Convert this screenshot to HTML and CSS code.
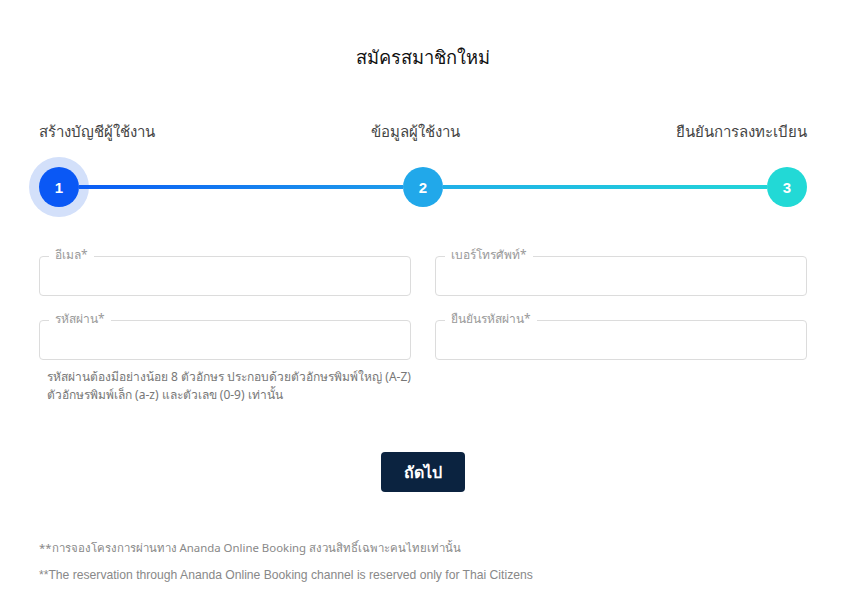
FILE: index.html
```html
<!DOCTYPE html>
<html lang="th">
<head>
<meta charset="utf-8">
<title>สมัครสมาชิกใหม่</title>
<link rel="stylesheet" href="styles.css">
</head>
<body>
<main class="page">
  <h1 class="title">สมัครสมาชิกใหม่</h1>

  <div class="steps">
    <div class="step-labels">
      <span class="step-label">สร้างบัญชีผู้ใช้งาน</span>
      <span class="step-label">ข้อมูลผู้ใช้งาน</span>
      <span class="step-label">ยืนยันการลงทะเบียน</span>
    </div>
    <div class="track">
      <span class="dot dot-1 active">1</span>
      <span class="seg seg-1"></span>
      <span class="dot dot-2">2</span>
      <span class="seg seg-2"></span>
      <span class="dot dot-3">3</span>
    </div>
  </div>

  <form class="form">
    <div class="grid">
      <div class="field">
        <span class="field-label">อีเมล*</span>
        <input class="field-input" type="email">
      </div>
      <div class="field">
        <span class="field-label">เบอร์โทรศัพท์*</span>
        <input class="field-input" type="tel">
      </div>
      <div class="col">
        <div class="field">
          <span class="field-label">รหัสผ่าน*</span>
          <input class="field-input" type="password">
        </div>
        <p class="hint">รหัสผ่านต้องมีอย่างน้อย 8 ตัวอักษร ประกอบด้วยตัวอักษรพิมพ์ใหญ่ (A-Z)<br>ตัวอักษรพิมพ์เล็ก (a-z) และตัวเลข (0-9) เท่านั้น</p>
      </div>
      <div class="col">
        <div class="field">
          <span class="field-label">ยืนยันรหัสผ่าน*</span>
          <input class="field-input" type="password">
        </div>
      </div>
    </div>
    <div class="actions">
      <button type="button" class="btn">ถัดไป</button>
    </div>
  </form>

  <footer class="notes">
    <p class="note note-th">**การจองโครงการผ่านทาง Ananda Online Booking สงวนสิทธิ์เฉพาะคนไทยเท่านั้น</p>
    <p class="note note-en">**The reservation through Ananda Online Booking channel is reserved only for Thai Citizens</p>
  </footer>
</main>
</body>
</html>
```

FILE: styles.css
```css
* { box-sizing: border-box; }
html, body { margin: 0; padding: 0; background: #fff; }
body {
  font-family: "Noto Sans", "Open Sans", "Liberation Sans", sans-serif;
  color: #333;
}
.page {
  width: 768px;
  margin: 0 0 0 39px;
  padding-top: 43px;
}
.title {
  margin: 0;
  font-size: 18.3px;
  line-height: 28px;
  font-weight: 400;
  text-align: center;
  color: #111;
}
.steps { margin-top: 48px; }
.step-labels {
  display: flex;
  justify-content: space-between;
  font-size: 15px;
  line-height: 24px;
  color: #444;
}
.track {
  margin-top: 24px;
  display: flex;
  align-items: center;
  height: 40px;
}
.dot {
  flex: none;
  width: 40px;
  height: 40px;
  border-radius: 50%;
  color: #fff;
  font-family: "Liberation Sans", Arial, sans-serif;
  font-weight: 700;
  font-size: 15px;
  display: flex;
  align-items: center;
  justify-content: center;
}
.dot-1 { background: #0a58f5; }
.dot-2 { background: #21a8ea; }
.dot-3 { background: #22d9d6; }
.active { box-shadow: 0 0 0 10px #d3e0fa; }
.seg { flex: 1; height: 4px; }
.seg-1 { background: linear-gradient(90deg, #0a5cf5, #1e9deb); }
.seg-2 { background: linear-gradient(90deg, #1fb0e8, #22d5d8); }

.form { margin-top: 49px; }
.grid {
  display: grid;
  grid-template-columns: 1fr 1fr;
  column-gap: 24px;
  row-gap: 24px;
}
.field { position: relative; }
.field-input {
  display: block;
  width: 100%;
  height: 40px;
  border: 1px solid #dcdcdc;
  border-radius: 4px;
  background: #fff;
  outline: none;
  padding: 0 12px;
  font: inherit;
}
.field-label {
  position: absolute;
  top: -9px;
  left: 10px;
  padding: 0 6px;
  background: #fff;
  font-size: 12px;
  line-height: 16px;
  color: #999;
}
.hint {
  margin: 8px 0 0;
  padding-left: 8px;
  font-size: 12px;
  line-height: 18px;
  color: #777;
  white-space: nowrap;
}
.actions {
  margin-top: 48px;
  display: flex;
  justify-content: center;
}
.btn {
  width: 84px;
  height: 40px;
  border: 0;
  border-radius: 4px;
  background: #0b2340;
  color: #fff;
  font: inherit;
  font-size: 16px;
  font-weight: 700;
  cursor: pointer;
}
.notes { margin-top: 47px; }
.note {
  margin: 0;
  line-height: 18px;
  color: #888;
  white-space: nowrap;
}
.note-th { font-size: 11.4px; }
.note-en {
  margin-top: 9px;
  font-family: "Liberation Sans", Arial, sans-serif;
  font-size: 12.15px;
}
```
